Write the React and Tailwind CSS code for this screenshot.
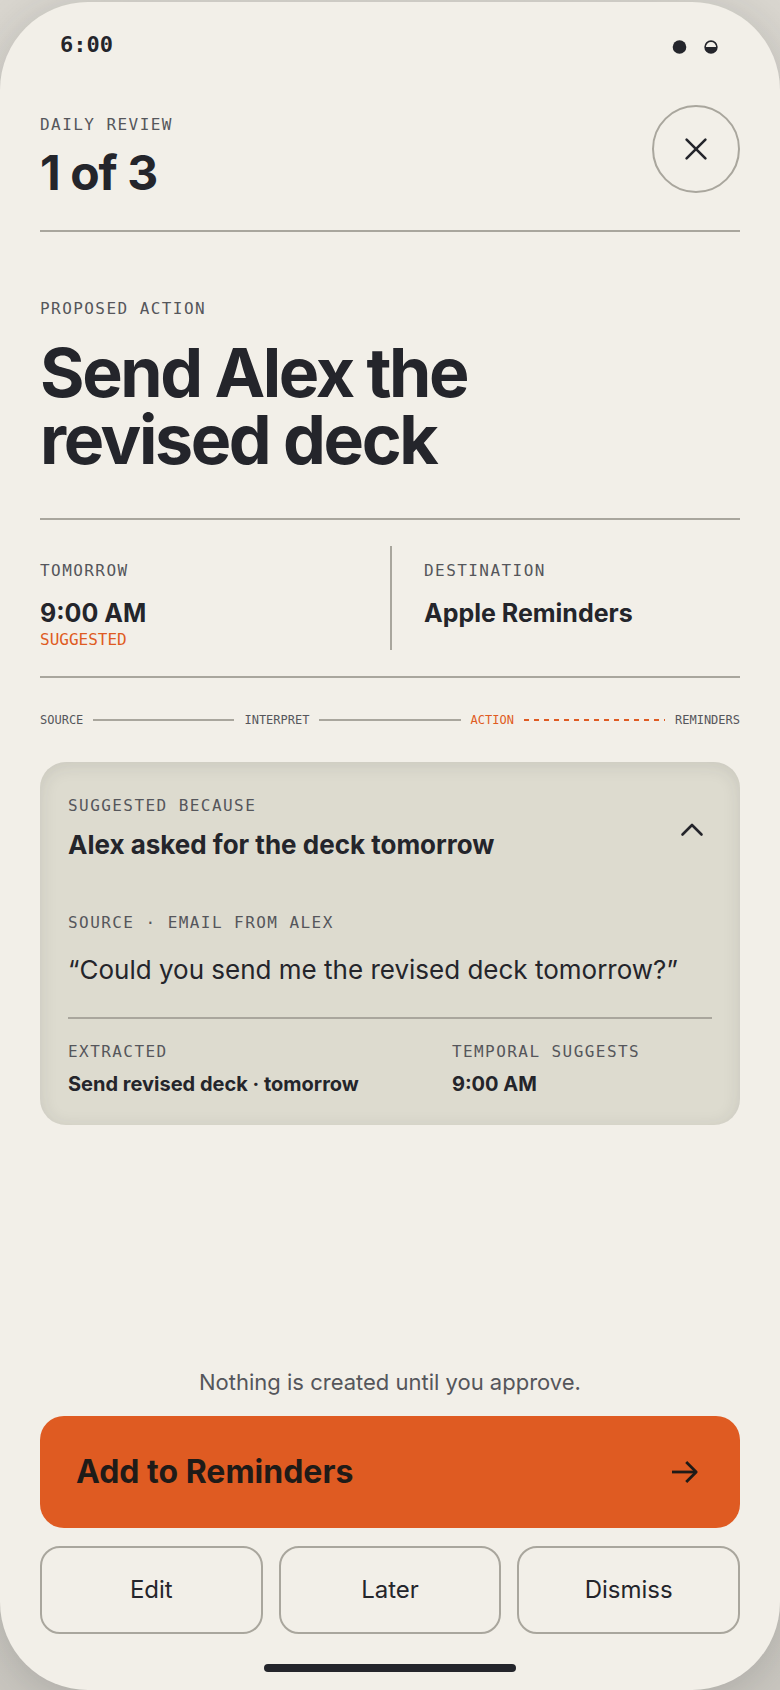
import React, { useState } from "react";

const Label = ({ children }) => (
  <p className="font-['DejaVu_Sans_Mono',monospace] text-base/6 font-normal tracking-[0.09em] text-[#55565b] uppercase">
    {children}
  </p>
);

const FlowRail = () => (
  <div className="flex items-center gap-[10px] py-[34px] font-['DejaVu_Sans_Mono',monospace] text-xs/4 text-[#55565b]">
    <span>SOURCE</span>
    <span className="h-[2px] flex-1 bg-[#a9a69d]" />
    <span>INTERPRET</span>
    <span className="h-[2px] flex-1 bg-[#a9a69d]" />
    <span className="text-[#df5b22]">ACTION</span>
    <span className="h-[2px] flex-1 bg-[repeating-linear-gradient(90deg,#df5b22_0_5px,transparent_5px_10px)]" />
    <span>REMINDERS</span>
  </div>
);

const StatusBar = () => (
  <div className="flex h-[86px] items-center justify-between px-[60px]">
    <span className="font-['DejaVu_Sans_Mono',monospace] text-[22px]/8 font-bold">6:00</span>
    <svg width="48" height="16" viewBox="0 0 48 16" className="mt-1" aria-hidden="true">
      <circle cx="7.5" cy="8" r="6.8" fill="currentColor" />
      <circle cx="39" cy="8" r="5.9" fill="none" stroke="currentColor" strokeWidth="1.6" />
      <path d="M33 8h12a6 6 0 0 1-12 0z" fill="currentColor" />
    </svg>
  </div>
);

const App = () => {
  const [open, setOpen] = useState(true);

  return (
    <div className="min-h-screen flex flex-col bg-linear-to-b from-[#d9d6cf] to-[#cac7c0] pt-[2px] font-[Inter,sans-serif] text-[#24252b]">
      <main className="flex flex-1 flex-col rounded-[88px] bg-[#f2efe8] shadow-[0_8px_44px_rgba(36,37,43,0.18)]">
        <StatusBar />

        <div className="flex flex-1 flex-col px-10">
          <header className="flex items-start justify-between border-b-2 border-[#a9a69d] pt-[17px] pb-[33px]">
            <div className="flex flex-col gap-3 pt-2">
              <Label>Daily review</Label>
              <p className="text-[48px]/[48px] font-bold tracking-[-0.02em]">1 of 3</p>
            </div>
            <button
              aria-label="Close review"
              className="flex size-[88px] cursor-pointer items-center justify-center rounded-full border-2 border-[#a9a69d]"
            >
              <svg width="24" height="24" viewBox="0 0 24 24" fill="none" stroke="currentColor" strokeWidth="2.6" strokeLinecap="round">
                <path d="M2.6 2.6l18.8 18.8M21.4 2.6L2.6 21.4" />
              </svg>
            </button>
          </header>

          <section className="border-b-2 border-[#a9a69d] pt-[65px] pb-[45px]">
            <Label>Proposed action</Label>
            <h1 className="mt-[18px] max-w-[560px] text-[68px]/[67px] font-bold tracking-[-0.035em]">
              Send Alex the revised deck
            </h1>
          </section>

          <section className="grid grid-cols-2 border-b-2 border-[#a9a69d] py-[26px]">
            <div className="pt-[13px]">
              <Label>Tomorrow</Label>
              <p className="mt-[14px] text-[25px]/8 font-bold">9:00 AM</p>
              <p className="mt-px font-['DejaVu_Sans_Mono',monospace] text-base/5 text-[#df5b22]">SUGGESTED</p>
            </div>
            <div className="border-l-2 border-[#a9a69d] pt-[13px] pl-8">
              <Label>Destination</Label>
              <p className="mt-[14px] text-[25px]/8 font-bold">Apple Reminders</p>
            </div>
          </section>

          <FlowRail />

          <section className="rounded-[26px] bg-[#dddbcf] px-7 pt-8 pb-[29px] shadow-[inset_0_3px_18px_rgba(36,37,43,0.11)]">
            <button
              aria-expanded={open}
              onClick={() => setOpen(!open)}
              className="flex w-full cursor-pointer items-center justify-between text-left"
            >
              <div>
                <Label>Suggested because</Label>
                <p className="mt-[11px] text-[26px]/8 font-bold">Alex asked for the deck tomorrow</p>
              </div>
              <svg width="24" height="24" viewBox="0 0 24 24" fill="none" stroke="currentColor" strokeWidth="2.6" strokeLinecap="round" strokeLinejoin="round" className={open ? "mr-2" : "mr-2 rotate-180"}>
                <path d="M2.5 18.5L12 9l9.5 9.5" />
              </svg>
            </button>

            {open && (
              <div className="mt-[50px]">
                <Label>Source · Email from Alex</Label>
                <blockquote className="mt-[15px] border-b-2 border-[#a9a69d] pb-[27px] text-[26px]/10">
                  “Could you send me the revised deck tomorrow?”
                </blockquote>
                <div className="grid grid-cols-[23fr_17fr] gap-x-8 pt-[21px]">
                  <div>
                    <Label>Extracted</Label>
                    <p className="mt-2 text-xl/6 font-bold">Send revised deck · tomorrow</p>
                  </div>
                  <div>
                    <Label>Temporal suggests</Label>
                    <p className="mt-2 text-xl/6 font-bold">9:00 AM</p>
                  </div>
                </div>
              </div>
            )}
          </section>

          <footer className="mt-auto pt-10 pb-[18px]">
            <p className="text-center text-[22px]/8 text-[#55565b]">Nothing is created until you approve.</p>
            <button className="mt-[18px] flex h-28 w-full cursor-pointer items-center justify-between rounded-3xl bg-[#df5b22] pr-10 pl-9 text-[#1f1b18]">
              <span className="text-[32px]/10 font-bold">Add to Reminders</span>
              <svg width="30" height="30" viewBox="0 0 30 30" fill="none" stroke="currentColor" strokeWidth="2.8">
                <path d="M2 15h24" />
                <path d="M16.2 5L26.2 15l-10 10" strokeLinejoin="round" />
              </svg>
            </button>
            <div className="mt-[18px] grid grid-cols-3 gap-4">
              {["Edit", "Later", "Dismiss"].map((name) => (
                <button
                  key={name}
                  className="h-[88px] cursor-pointer rounded-[20px] border-2 border-[#a9a69d] text-2xl"
                >
                  {name}
                </button>
              ))}
            </div>
            <div className="mx-auto mt-[30px] h-2 w-[252px] rounded-full bg-[#24252b]" />
          </footer>
        </div>
      </main>
    </div>
  );
};

export default App;
